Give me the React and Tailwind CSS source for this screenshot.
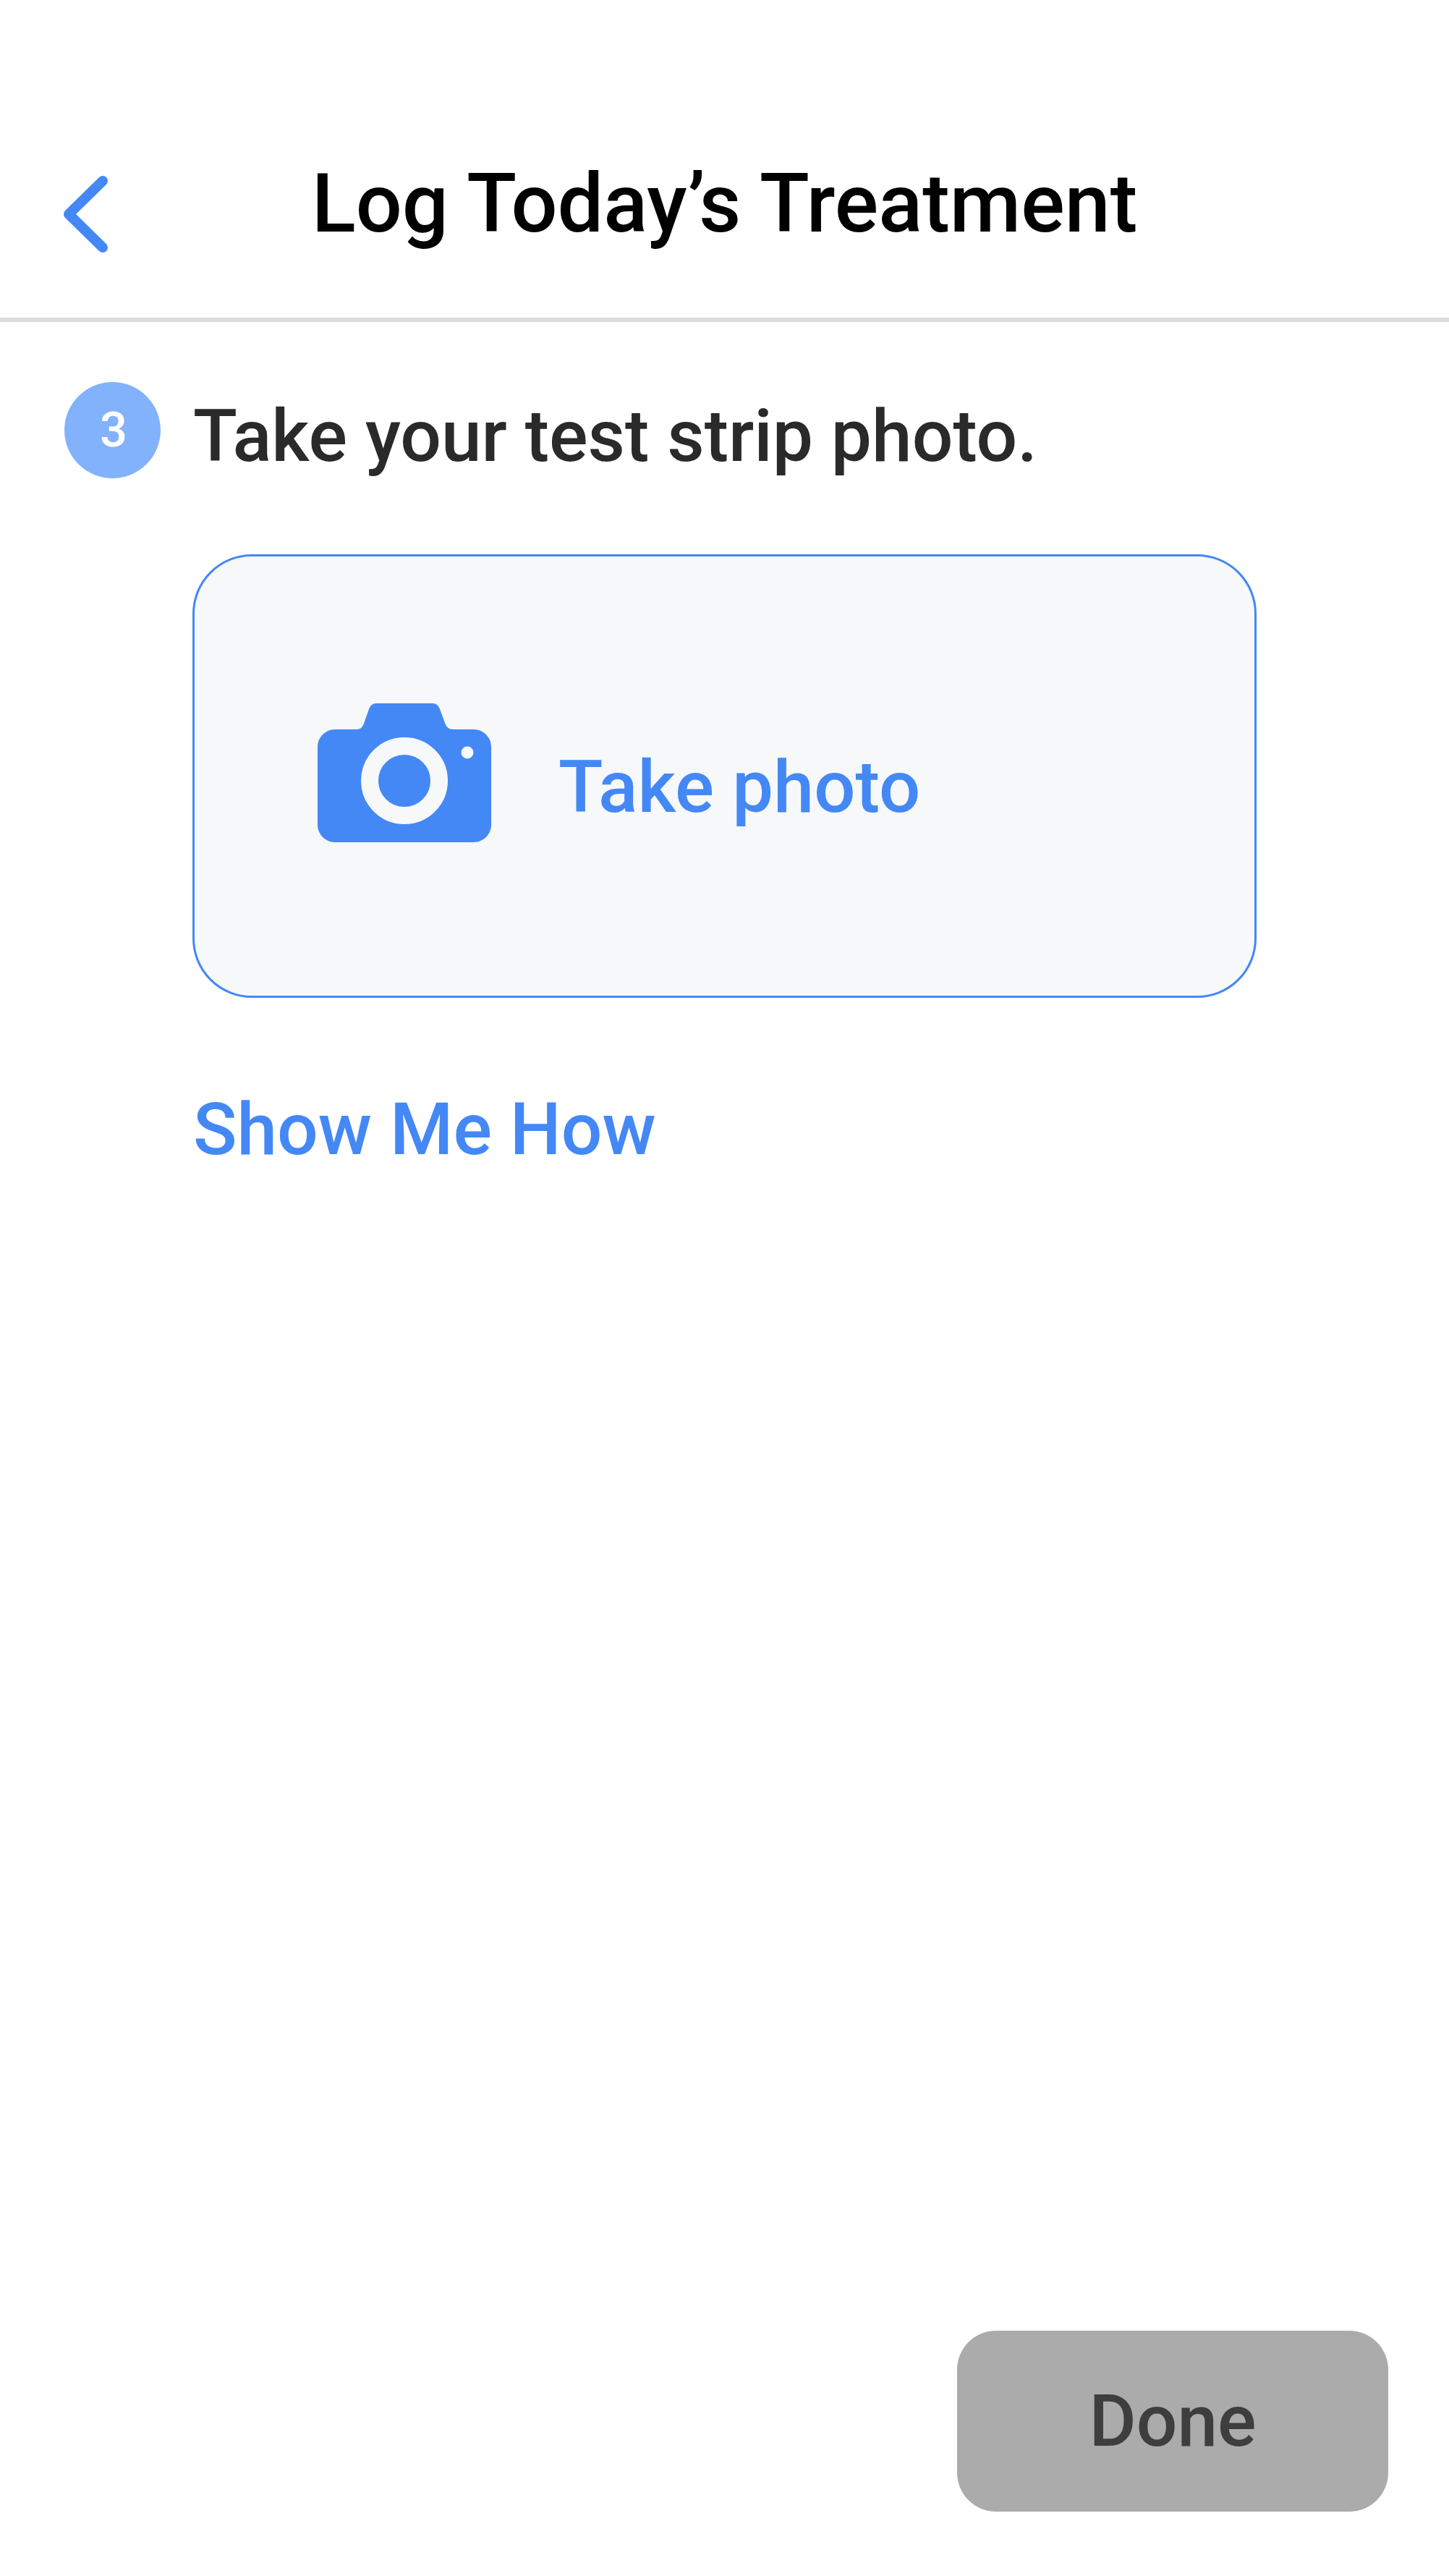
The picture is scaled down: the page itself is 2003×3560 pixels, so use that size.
import React from 'react';

const font = { fontFamily: 'Roboto, sans-serif' };

function BackIcon() {
  return (
    <svg width="62" height="106" viewBox="0 0 62 106" fill="none">
      <path d="M54 7L7 53L54 99" stroke="#4488f6" strokeWidth="14" strokeLinecap="round" strokeLinejoin="round" />
    </svg>
  );
}

function CameraIcon() {
  return (
    <svg width="240" height="192" viewBox="0 0 240 192" className="shrink-0 mb-[10px]">
      <path
        d="M24 36H54C59 36 62 33 64 28L71 8C73 3 76 0 81 0H159C164 0 167 3 169 8L176 27C178 33 182 36 187 36H216C229 36 240 47 240 60V168C240 181 229 192 216 192H24C11 192 0 181 0 168V60C0 47 11 36 24 36Z"
        fill="#4488f6"
      />
      <circle cx="120" cy="107" r="48" fill="none" stroke="#f6f8fa" strokeWidth="24" />
      <circle cx="207" cy="68" r="8.5" fill="#f6f8fa" />
    </svg>
  );
}

export default function App() {
  return (
    <div className="flex flex-col w-full h-[3560px] bg-white" style={font}>
      <header className="relative h-[445px] pt-[217px] border-b-[6px] border-[#dcdcdc] flex justify-center">
        <div className="absolute left-[88px] top-[243px]">
          <BackIcon />
        </div>
        <h1 className="text-[113px] leading-[130px] font-medium text-black">Log Today’s Treatment</h1>
      </header>

      <main className="flex-1 pl-[89px]">
        <div className="flex items-start mt-[83px]">
          <div className="w-[133px] h-[133px] rounded-full bg-[#83b2fd] text-white flex items-center justify-center text-[67px] font-medium pl-[3px] shrink-0">
            3
          </div>
          <p className="ml-[45px] mt-[17px] text-[100px] leading-[116px] font-medium text-[#2a2a2a]">
            Take your test strip photo.
          </p>
        </div>

        <button className="flex items-center mt-[105px] ml-[177px] w-[1471px] h-[613px] pl-[170px] bg-[#f6f8fa] border-[3px] border-[#4488f6] rounded-[82px]">
          <CameraIcon />
          <span className="ml-[93px] mt-[30px] text-[101px] leading-[116px] font-medium text-[#4488f6]">Take photo</span>
        </button>

        <p className="mt-[124px] ml-[178px] text-[100px] leading-[116px] font-medium text-[#4488f6]">Show Me How</p>
      </main>

      <div className="flex justify-end pr-[84px] pb-[89px]">
        <button className="w-[596px] h-[250px] rounded-[54px] bg-[#ababab] text-[#3e3e3e] text-[100px] font-medium">
          Done
        </button>
      </div>
    </div>
  );
}
